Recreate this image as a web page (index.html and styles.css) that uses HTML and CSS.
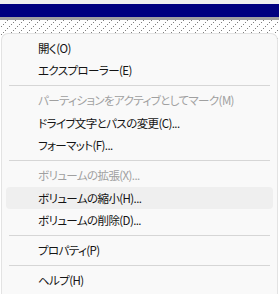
FILE: index.html
```html
<!DOCTYPE html>
<html lang="ja">
<head>
<meta charset="utf-8">
<link rel="stylesheet" href="styles.css">
</head>
<body>
<div class="strip"></div>
<div class="navy"></div>
<div class="rule"></div>
<div class="hatch">
  <div class="menu">
    <div class="item">開く(O)</div>
    <div class="item">エクスプローラー(E)</div>
    <div class="sep"></div>
    <div class="item disabled">パーティションをアクティブとしてマーク(M)</div>
    <div class="item">ドライブ文字とパスの変更(C)...</div>
    <div class="item">フォーマット(F)...</div>
    <div class="sep"></div>
    <div class="item disabled">ボリュームの拡張(X)...</div>
    <div class="item hover">ボリュームの縮小(H)...</div>
    <div class="item">ボリュームの削除(D)...</div>
    <div class="sep"></div>
    <div class="item">プロパティ(P)</div>
    <div class="sep"></div>
    <div class="item">ヘルプ(H)</div>
  </div>
</div>
</body>
</html>
```
FILE: styles.css
```css
html, body {
  margin: 0;
  padding: 0;
  width: 279px;
  height: 294px;
  overflow: hidden;
  background: #ffffff;
}
body {
  font-family: "Noto Sans CJK JP", "Noto Sans", sans-serif;
  display: flex;
  flex-direction: column;
}
.strip {
  height: 4px;
  background: #f0f0f0;
}
.navy {
  height: 13px;
  background: #000080;
}
.rule {
  height: 3px;
  background: #a0a0a0;
}
.hatch {
  flex: 1;
  min-height: 0;
  display: flex;
  flex-direction: column;
  padding-top: 13px;
  background-color: #ffffff;
  background-image: url("data:image/svg+xml,%3Csvg xmlns='http://www.w3.org/2000/svg' width='8' height='8' shape-rendering='crispEdges'%3E%3Crect x='7' y='0' width='1' height='1' fill='%23808080'/%3E%3Crect x='5' y='2' width='1' height='1' fill='%23808080'/%3E%3Crect x='3' y='4' width='1' height='1' fill='%23808080'/%3E%3Crect x='1' y='6' width='1' height='1' fill='%23808080'/%3E%3C/svg%3E");
}
.menu {
  flex: 1;
  min-height: 0;
  overflow: hidden;
  margin: 0 1px;
  background: #f9f9f9;
  border: 1px solid #e3e3e3;
  border-bottom: none;
  border-radius: 7px 7px 0 0;
  padding-top: 2.5px;
  display: flex;
  flex-direction: column;
}
.item {
  flex: none;
  height: 22.5px;
  line-height: 22.5px;
  margin: 0 4px;
  padding-left: 32px;
  font-size: 11.5px;
  letter-spacing: -0.6px;
  color: #141414;
  font-feature-settings: "palt";
  border-radius: 4px;
  white-space: nowrap;
}
.item.disabled {
  color: #a0a0a0;
}
.item.hover {
  background: #efefef;
}
.sep {
  flex: none;
  height: 7.5px;
  display: flex;
  align-items: center;
  padding: 0 7px;
}
.sep::before {
  content: "";
  flex: 1;
  height: 1px;
  background: #d6d6d6;
}
```
